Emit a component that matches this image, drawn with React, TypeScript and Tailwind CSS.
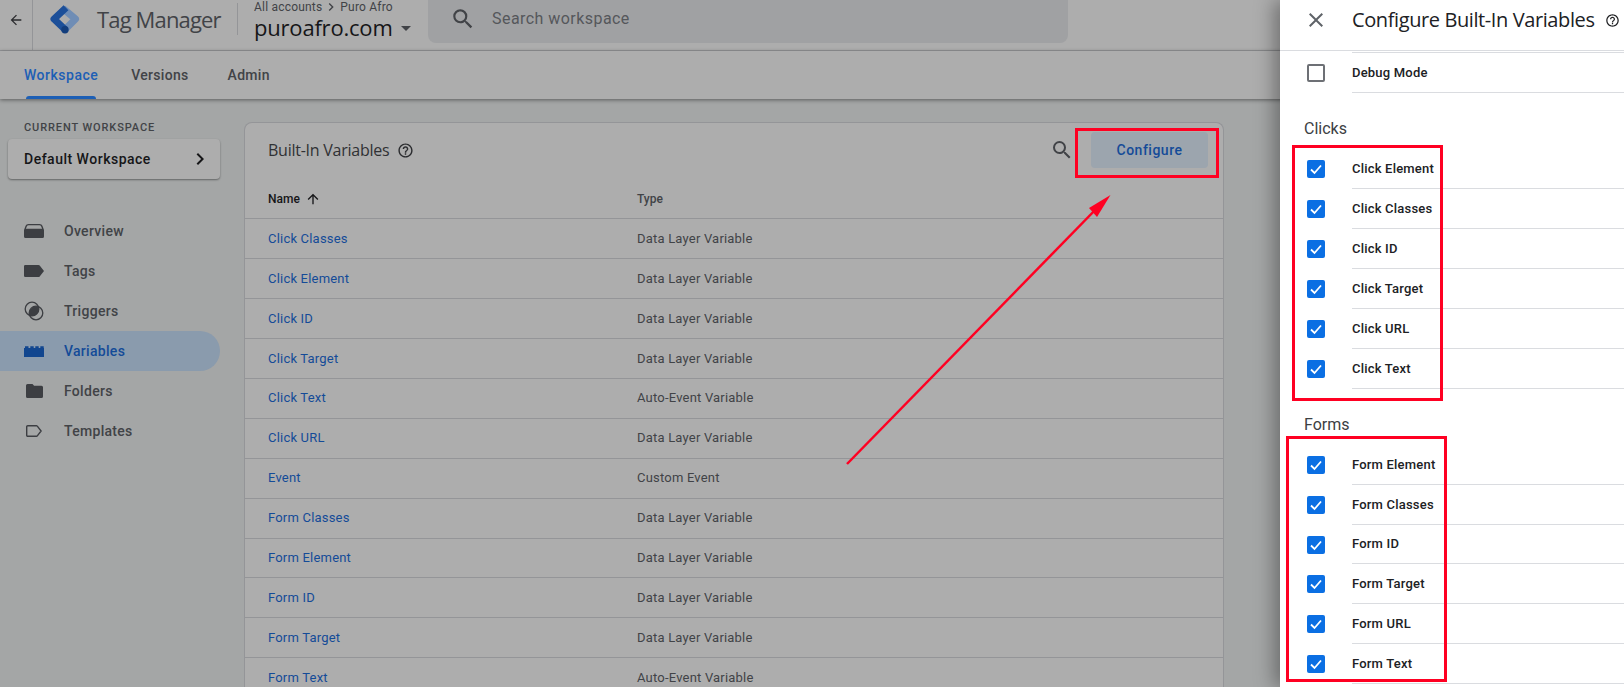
import { MdArrowBack, MdArrowUpward, MdChevronRight, MdClose, MdHelpOutline, MdSearch } from "react-icons/md";

const rows = [
  ["Click Classes", "Data Layer Variable"],
  ["Click Element", "Data Layer Variable"],
  ["Click ID", "Data Layer Variable"],
  ["Click Target", "Data Layer Variable"],
  ["Click Text", "Auto-Event Variable"],
  ["Click URL", "Data Layer Variable"],
  ["Event", "Custom Event"],
  ["Form Classes", "Data Layer Variable"],
  ["Form Element", "Data Layer Variable"],
  ["Form ID", "Data Layer Variable"],
  ["Form Target", "Data Layer Variable"],
  ["Form Text", "Auto-Event Variable"],
];

const clicks = ["Click Element", "Click Classes", "Click ID", "Click Target", "Click URL", "Click Text"];
const forms = ["Form Element", "Form Classes", "Form ID", "Form Target", "Form URL", "Form Text"];

function Logo() {
  return (
    <svg viewBox="0 0 30 30" className="h-[30px] w-[30px]" fill="none" strokeWidth="7" strokeLinejoin="round">
      <path d="M13 4.500 25.500 15 15 25.500" stroke="#6f8db5" />
      <path d="M16 3.800 4 15 15 25.500" stroke="#1c4f99" />
      <circle cx="15" cy="25.800" r="3.700" fill="#123d7c" />
    </svg>
  );
}

function OverviewIcon() {
  return (
    <svg viewBox="0 0 20 14" className="h-[14px] w-5" fill="#3c3e42">
      <path d="M4.500 0h11C17 0 18 .8 18.500 2L20 6v6.500a1.500 1.500 0 0 1-1.500 1.500h-17A1.500 1.500 0 0 1 0 12.500V6l1.500-4C2 .8 3 0 4.500 0Zm0 1.300c-.8 0-1.400.4-1.700 1.200L1.900 4.700h16.200l-.9-2.200c-.3-.8-.9-1.200-1.700-1.200Z" />
    </svg>
  );
}

function TagIcon() {
  return (
    <svg viewBox="0 0 20 12" className="h-3 w-5" fill="#3c3e42">
      <path d="M1.200 0h13.300c.5 0 .9.200 1.200.6L20 6l-4.300 5.400c-.3.400-.7.600-1.200.6H1.200A1.200 1.200 0 0 1 0 10.800V1.200A1.200 1.200 0 0 1 1.200 0Z" />
    </svg>
  );
}

function TriggerIcon() {
  return (
    <svg viewBox="0 0 20 20" className="h-5 w-5">
      <circle cx="8" cy="8" r="6.800" fill="none" stroke="#3c3e42" strokeWidth="1.300" />
      <circle cx="12" cy="12" r="6.800" fill="none" stroke="#3c3e42" strokeWidth="1.300" />
      <path d="M14.500 5.800a6.800 6.800 0 0 1-8.700 8.700 6.800 6.800 0 0 1 8.700-8.700Z" fill="#3c3e42" />
    </svg>
  );
}

function VariableIcon() {
  return (
    <svg viewBox="0 0 20 12" className="h-3 w-5" fill="#11468f">
      <path d="M0 3h1V1.200h3.500V3h1.800V1.200h3.400V3h1.600V1.200h3.400V3h1.600V1.200h3.400V3h.3v9H0Z" />
    </svg>
  );
}

function FolderIcon() {
  return (
    <svg viewBox="0 0 17 14" className="h-[14px] w-[17px]" fill="#3c3e42">
      <path d="M1.500 0h5l1.600 1.800h7.400A1.500 1.500 0 0 1 17 3.300v9.200a1.500 1.500 0 0 1-1.500 1.500h-14A1.500 1.500 0 0 1 0 12.500v-11A1.500 1.500 0 0 1 1.500 0Z" />
    </svg>
  );
}

function TemplateIcon() {
  return (
    <svg viewBox="0 0 16 12" className="h-3 w-4" fill="none" stroke="#3c3e42" strokeWidth="1.400">
      <path d="M1.700.7h8.800c.3 0 .6.100.8.400l3.800 4.900-3.800 4.900c-.2.300-.5.400-.8.400H1.700a1 1 0 0 1-1-1V1.700a1 1 0 0 1 1-1Z" />
    </svg>
  );
}

const nav = [
  { label: "Overview", Icon: OverviewIcon },
  { label: "Tags", Icon: TagIcon },
  { label: "Triggers", Icon: TriggerIcon },
  { label: "Variables", Icon: VariableIcon, active: true },
  { label: "Folders", Icon: FolderIcon },
  { label: "Templates", Icon: TemplateIcon },
];

function Check({ label, checked = true }: { label: string; checked?: boolean }) {
  return (
    <div className={label === "Form ID" ? "flex h-[39px] items-center" : "flex h-10 items-center"}>
      <div className="flex w-[72px] shrink-0 justify-center pr-[1px]">
        {checked ? (
          <span className="flex h-[18px] w-[18px] items-center justify-center rounded-[2px] bg-[#0b6fe3]">
            <svg viewBox="0 0 18 18" className="h-[18px] w-[18px]" fill="none" stroke="#fff" strokeWidth="1.800">
              <path d="M4 9.500 7.500 13 14 5.500" />
            </svg>
          </span>
        ) : (
          <span className="h-[18px] w-[18px] rounded-[2px] border-2 border-[#6d7075]" />
        )}
      </div>
      <div className="flex h-full flex-1 items-center border-b border-[#dadce0] text-[13px] font-medium tracking-[0.2px] text-[#202124]">
        {label}
      </div>
    </div>
  );
}

function Heading({ children }: { children: string }) {
  return <div className="flex h-14 items-center pl-6 pt-[15px] text-base text-[#3c4043]">{children}</div>;
}

export default function App() {
  return (
    <div className="relative h-[687px] w-[1624px] overflow-hidden bg-[#a4a6a6] font-['Roboto',sans-serif]">
      {/* header */}
      <header className="flex h-[51px] border-b border-[#949598] bg-[#adadad]">
        <div className="flex w-[33px] items-center justify-center border-r border-[#949598] pb-[10px]">
          <MdArrowBack size={16} className="text-[#2a2b2e]" />
        </div>
        <div className="flex w-[64px] items-center justify-center pb-[12px]">
          <Logo />
        </div>
        <div className="flex w-[140px] items-center pb-[11px] font-['Open_Sans',sans-serif] text-[22px] tracking-[-0.85px] text-[#414347]">
          Tag Manager
        </div>
        <div className="mt-[3px] h-[32px] w-px bg-[#949598]" />
        <div className="ml-4 w-[174px] leading-none">
          <div className="-mt-[1px] flex items-center text-xs tracking-[0.2px] text-[#414347]">
            All accounts <MdChevronRight size={16} className="mx-[1px]" /> Puro Afro
          </div>
          <div className="mt-[1px] flex items-center font-['Open_Sans',sans-serif] text-[22px] tracking-[-0.2px] text-[#161618]">
            puroafro.com
            <span className="ml-2 mt-[2px] h-0 w-0 border-x-[5px] border-t-[5px] border-x-transparent border-t-[#414347]" />
          </div>
        </div>
        <div className="flex h-[43px] w-[640px] items-center rounded-b-lg bg-[#a0a1a3] pb-[5px] pl-[22px]">
          <MdSearch size={26} className="text-[#414347]" />
          <span className="ml-[16px] text-base tracking-[0.45px] text-[#55575b]">Search workspace</span>
        </div>
      </header>

      {/* tabs */}
      <nav className="relative z-10 flex h-[48px] items-center gap-[39px] bg-[#adadad] pl-6 text-sm font-medium tracking-[0.3px] text-[#414347] shadow-[0_1px_4px_rgba(0,0,0,0.45)]">
        <div className="relative -mr-[6px] flex h-full items-center tracking-[0.5px] text-[#1d5fb5]">
          Workspace
          <span className="absolute inset-x-[2px] bottom-0 h-[3px] rounded-t-[3px] bg-[#1d5fb5]" />
        </div>
        <div>Versions</div>
        <div>Admin</div>
      </nav>

      <div className="flex">
        {/* sidebar */}
        <aside className="w-[244px] shrink-0 pt-[23px]">
          <div className="pl-6 text-[11px] font-medium leading-3 tracking-[0.9px] text-[#414347]">CURRENT WORKSPACE</div>
          <div className="ml-2 mt-[5px] flex h-10 w-[212px] items-center justify-between rounded bg-[#adadad] pl-4 pr-2 text-sm font-medium tracking-[0.5px] text-[#161618] shadow-[0_1px_2px_rgba(0,0,0,0.4)]">
            Default Workspace
            <MdChevronRight size={24} />
          </div>
          <div className="mt-[32px]">
            {nav.map(({ label, Icon, active }) => (
              <div
                key={label}
                className={
                  active
                    ? "flex h-10 w-[220px] items-center rounded-r-full bg-[#8a9bad] text-sm font-medium tracking-[0.3px] text-[#144b98]"
                    : "flex h-10 w-[220px] items-center text-sm font-medium tracking-[0.3px] text-[#414347]"
                }
              >
                <span className="flex w-[64px] justify-center pl-[4px]">
                  <Icon />
                </span>
                {label}
              </div>
            ))}
          </div>
        </aside>

        {/* main card */}
        <main className="mt-[23px] w-[980px] rounded-t-lg border border-[#949598] border-b-0 bg-[#adadad]">
          <div className="flex h-[54px] items-center justify-between pl-[23px] pr-[15px]">
            <div className="flex items-center gap-2 font-['Open_Sans',sans-serif] text-base tracking-[-0.25px] text-[#303134]">
              Built-In Variables
              <MdHelpOutline size={17} className="mt-[1px] text-[#2a2b2e]" />
            </div>
            <div className="flex items-center gap-[17px]">
              <MdSearch size={24} className="text-[#414347]" />
              <button className="flex h-9 w-[117px] items-center justify-center rounded bg-[#9ca5ae] text-sm font-medium tracking-[0.5px] text-[#144b98]">
                Configure
              </button>
            </div>
          </div>
          <div className="flex h-[42px] items-center border-b border-[#949598] pl-[23px] pt-[2px] text-xs font-medium text-[#161618]">
            <div className="flex w-[369px] items-center gap-[5px]">
              Name <MdArrowUpward size={16} />
            </div>
            <div className="text-[#414347]">Type</div>
          </div>
          {rows.map(([name, type]) => (
            <div key={name} className="flex h-[39.95px] items-center border-b border-[#949598] pl-[23px] text-[13px] tracking-[0.2px]">
              <div className="w-[369px] text-[#144b98]">{name}</div>
              <div className="text-[#414347]">{type}</div>
            </div>
          ))}
        </main>
      </div>

      {/* side panel over the page */}
      <aside className="absolute inset-y-0 right-0 z-20 w-[344px] bg-white shadow-[-6px_0_18px_rgba(0,0,0,0.35)]">
        <div className="flex h-[51px] items-center border-b border-[#dadce0] pb-[10px]">
          <div className="flex w-[72px] justify-center">
            <MdClose size={24} className="text-[#5f6368]" />
          </div>
          <div className="flex items-center gap-[10px] font-['Open_Sans',sans-serif] text-[20px] tracking-[-0.4px] text-[#202124]">
            Configure Built-In Variables
            <MdHelpOutline size={15} />
          </div>
        </div>
        <div className="ml-[72px] mt-[1px] border-b border-[#dadce0]" />
        <Check label="Debug Mode" checked={false} />
        <Heading>Clicks</Heading>
        {clicks.map((c) => (
          <Check key={c} label={c} />
        ))}
        <Heading>Forms</Heading>
        {forms.map((f) => (
          <Check key={f} label={f} />
        ))}
      </aside>

      {/* annotations */}
      <div className="absolute left-[1075px] top-[128px] z-30 h-[50px] w-[144px] border-[3px] border-[#ff0022]" />
      <div className="absolute left-[1292px] top-[145px] z-30 h-[256px] w-[151px] border-[3px] border-[#ff0022]" />
      <div className="absolute left-[1286px] top-[436px] z-30 h-[246px] w-[161px] border-[3px] border-[#ff0022]" />
      <svg className="absolute left-[840px] top-[190px] z-30 h-[280px] w-[280px]" viewBox="0 0 280 280">
        <path d="M7 274 260 15" stroke="#ff0022" strokeWidth="2.500" fill="none" />
        <path d="M270.500 5 257 27 249 18Z" fill="#ff0022" />
      </svg>
    </div>
  );
}
